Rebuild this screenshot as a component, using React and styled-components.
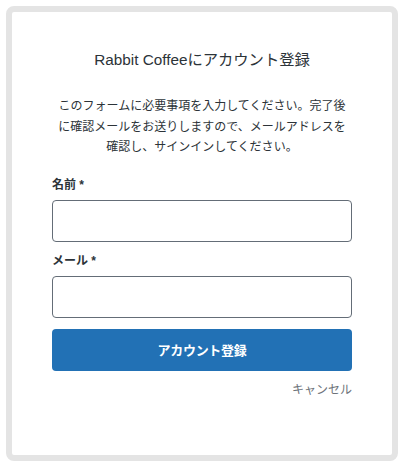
import React from "react";
import styled, { createGlobalStyle } from "styled-components";

const Global = createGlobalStyle`
  html, body { margin: 0; padding: 0; background: #ffffff; }
  body {
    font-family: "Liberation Sans", "Noto Sans CJK JP", "Noto Sans", sans-serif;
    color: #1d2327;
  }
  * { box-sizing: border-box; }
`;

const Page = styled.div`
  padding: 6px 7px 6px 6px;
`;

const Frame = styled.div`
  border: 6px solid #e4e4e4;
  border-radius: 8px;
  background: #ffffff;
  height: 455px;
  padding: 37px 40px 0 40px;
  display: flex;
  flex-direction: column;
`;

const Title = styled.h1`
  margin: 0;
  font-size: 15.3px;
  line-height: 22px;
  font-weight: 400;
  text-align: center;
  color: #2c3338;
`;

const Lead = styled.p`
  margin: 25px 0 0 0;
  font-size: 12px;
  line-height: 20.5px;
  text-align: center;
  color: #2c3338;
  white-space: nowrap;
`;

const Field = styled.div`
  display: flex;
  flex-direction: column;
  gap: 6px;
  margin-top: ${(p) => p.$top}px;
`;

const Label = styled.label`
  font-size: 12px;
  line-height: 18px;
  font-weight: 700;
  color: #2c3338;
`;

const Input = styled.input`
  height: 42px;
  width: 100%;
  border: 1px solid #646d77;
  border-radius: 4px;
  background: #fff;
  padding: 0 8px;
  font-size: 14px;
  outline: none;
`;

const Button = styled.button`
  margin-top: 11px;
  height: 42px;
  width: 100%;
  border: none;
  border-radius: 4px;
  background: #2271b5;
  color: #ffffff;
  font-family: inherit;
  font-size: 13px;
  font-weight: 700;
  letter-spacing: -0.3px;
  cursor: pointer;
`;

const CancelRow = styled.div`
  margin-top: 10px;
  display: flex;
  justify-content: flex-end;
`;

const Cancel = styled.a`
  font-size: 12px;
  line-height: 18px;
  color: #6d737a;
  text-decoration: none;
`;

export default function App() {
  return (
    <>
      <Global />
      <Page>
        <Frame>
          <Title>Rabbit Coffeeにアカウント登録</Title>
          <Lead>
            このフォームに必要事項を入力してください。完了後
            <br />
            に確認メールをお送りしますので、メールアドレスを
            <br />
            確認し、サインインしてください。
          </Lead>
          <Field $top={18}>
            <Label>名前 *</Label>
            <Input type="text" />
          </Field>
          <Field $top={10}>
            <Label>メール *</Label>
            <Input type="email" />
          </Field>
          <Button>アカウント登録</Button>
          <CancelRow>
            <Cancel href="#">キャンセル</Cancel>
          </CancelRow>
        </Frame>
      </Page>
    </>
  );
}
